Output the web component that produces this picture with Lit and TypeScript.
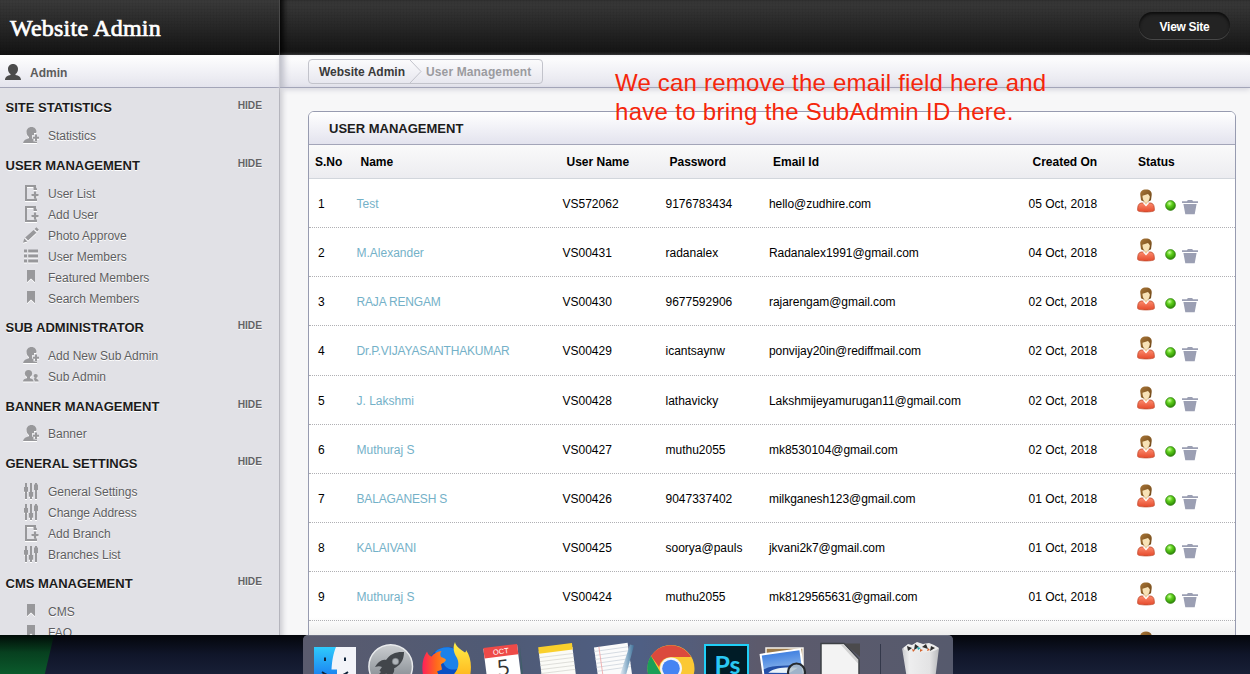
import { LitElement, html, css, svg } from "lit";
import { customElement } from "lit/decorators.js";
import { classMap } from "lit/directives/class-map.js";

type IconName = "adduser" | "users" | "doc" | "pencil" | "list" | "bookmark" | "sliders";

const sections: { title: string; items: [IconName, string][] }[] = [
  { title: "SITE STATISTICS", items: [["adduser", "Statistics"]] },
  {
    title: "USER MANAGEMENT",
    items: [
      ["doc", "User List"],
      ["doc", "Add User"],
      ["pencil", "Photo Approve"],
      ["list", "User Members"],
      ["bookmark", "Featured Members"],
      ["bookmark", "Search Members"],
    ],
  },
  { title: "SUB ADMINISTRATOR", items: [["adduser", "Add New Sub Admin"], ["users", "Sub Admin"]] },
  { title: "BANNER MANAGEMENT", items: [["adduser", "Banner"]] },
  {
    title: "GENERAL SETTINGS",
    items: [
      ["sliders", "General Settings"],
      ["sliders", "Change Address"],
      ["doc", "Add Branch"],
      ["sliders", "Branches List"],
    ],
  },
  { title: "CMS MANAGEMENT", items: [["bookmark", "CMS"], ["bookmark", "FAQ"]] },
];

const rows: string[][] = [
  ["1", "Test", "VS572062", "9176783434", "hello@zudhire.com", "05 Oct, 2018"],
  ["2", "M.Alexander", "VS00431", "radanalex", "Radanalex1991@gmail.com", "04 Oct, 2018"],
  ["3", "RAJA RENGAM", "VS00430", "9677592906", "rajarengam@gmail.com", "02 Oct, 2018"],
  ["4", "Dr.P.VIJAYASANTHAKUMAR", "VS00429", "icantsaynw", "ponvijay20in@rediffmail.com", "02 Oct, 2018"],
  ["5", "J. Lakshmi", "VS00428", "lathavicky", "Lakshmijeyamurugan11@gmail.com", "02 Oct, 2018"],
  ["6", "Muthuraj S", "VS00427", "muthu2055", "mk8530104@gmail.com", "02 Oct, 2018"],
  ["7", "BALAGANESH S", "VS00426", "9047337402", "milkganesh123@gmail.com", "01 Oct, 2018"],
  ["8", "KALAIVANI", "VS00425", "soorya@pauls", "jkvani2k7@gmail.com", "01 Oct, 2018"],
  ["9", "Muthuraj S", "VS00424", "muthu2055", "mk8129565631@gmail.com", "01 Oct, 2018"],
];

const glyphs: Record<IconName, unknown> = {
  adduser: svg`<path d="M8.500 0C5.500 0 3.500 2.200 3.500 5c0 2.300 1 4.200 2.500 5v1.200C3 12 .6 13 0 16h14v-1.500h-3.500V11.800H9V8.200h2V6h1.900C13.300 5.700 13.500 5.300 13.500 5c0-2.800-2-5-5-5z"/><path d="M12 7.500h2v2.300h2v2h-2V14h-2v-2.200h-2v-2h2z"/>`,
  users: svg`<circle cx="5.500" cy="5.500" r="3.600"/><path d="M4 8h3v2.200c2 .5 3.500 1.300 3.500 3.300H0c0-2 1.700-2.800 4-3.300z"/><circle cx="12.700" cy="8" r="2.100"/><path d="M11.900 9.500h1.600v1.200c1.200.4 2.100 1.200 2.100 2.800h-4c0-1.200-.3-2-.9-2.600z"/>`,
  doc: svg`<path d="M2 0h11v4h-1.800V2H4v12h8v-.5h2V16H2z"/><path d="M10.500 0L14 3.500V5h-3.500z"/><path d="M10.900 6.500h2.200V9h2.400v2.200h-2.400v2.500h-2.200v-2.500H8.500V9h2.400z"/>`,
  pencil: svg`<path d="M0 15.800l1.300-4.300 3 3zM2.200 10.600l8.400-7.700 2.800 2.800-8.300 7.900zM11.600 2L13.400.2l2.500 2.500-1.700 1.900z"/>`,
  list: svg`<path d="M1 1.500h3v3H1zM5.200 1.500H15v3H5.200zM1 6.500h3v3H1zM5.200 6.500H15v3H5.200zM1 11.500h3v3H1zM5.200 11.500H15v3H5.200z"/>`,
  bookmark: svg`<path d="M4 1h8v12.200L8 9.500l-4 3.700z"/>`,
  sliders: svg`<path d="M2 0h2v4h1v4.700H4V16H2V8.700H1V4h1zM7 0h2v9h1.200v4.700H9V16H7v-2.300H5.800V9H7zM12 0h2v1.500h1v5.800h-1V16h-2V7.300h-1V1.500h1z"/>`,
};

const person = html`<svg class="person" width="18" height="24" viewBox="0 0 18 24">
  <defs>
    <linearGradient id="s" x1="0" y1="0" x2="0" y2="1"><stop offset="0" stop-color="#fb8a6c" /><stop offset="1" stop-color="#e64a2c" /></linearGradient>
    <linearGradient id="h" x1="0" y1="0" x2="1" y2="1"><stop offset="0" stop-color="#a87638" /><stop offset="1" stop-color="#6d4516" /></linearGradient>
  </defs>
  <path d="M.7 21.500c-.2-4 .5-6.800 3.300-7.500h10c2.800.7 3.500 3.500 3.300 7.500-.4 1.900-16.200 1.900-16.600 0z" fill="url(#s)" stroke="#c04c30" stroke-width=".8" />
  <path d="M5.500 13.500L9 17.500l3.500-4z" fill="#fff" />
  <path d="M7.500 11h3v3L9 15.800 7.500 14z" fill="#eccb9a" />
  <path d="M3.300 6C2.800 2.500 5.300.5 9 .5s6.200 2 5.700 5.500L14 11.200l-2.500 1.200h-5L4 11.200z" fill="url(#h)" />
  <path d="M5.500 6.800L11 5l1.800 2.300c0 3.200-1.400 5.900-3.700 5.900S5.500 10.500 5.500 6.800z" fill="#f8e2b6" />
</svg>`;

const actions = html`${person}
  <svg class="dot" width="11" height="11" viewBox="0 0 11 11">
    <defs><radialGradient id="g" cx=".4" cy=".3" r=".7"><stop offset="0" stop-color="#c9ff9a" /><stop offset=".4" stop-color="#5fd01c" /><stop offset="1" stop-color="#2b8705" /></radialGradient></defs>
    <circle cx="5.500" cy="5.500" r="4.900" fill="url(#g)" stroke="#2f7d10" stroke-width=".7" />
  </svg>
  <svg class="bin" width="16" height="15" viewBox="0 0 16 15" fill="#9b9fb3">
    <path d="M0 1.200h5L5.800 0h4.400l.8 1.200h5v1.900H0zM1.400 4h13.200L12.700 14.300H3.300z" />
  </svg>`;

const dockArt = svg`
  <defs>
    <linearGradient id="fi" x1="0" y1="0" x2="0" y2="1"><stop offset="0" stop-color="#2fcafc"/><stop offset="1" stop-color="#1a7ff0"/></linearGradient>
    <linearGradient id="la" x1="0" y1="0" x2="0" y2="1"><stop offset="0" stop-color="#cbced1"/><stop offset="1" stop-color="#757c83"/></linearGradient>
    <linearGradient id="fx" x1="0" y1="0" x2="1" y2="0"><stop offset="0" stop-color="#ff1f5a"/><stop offset=".6" stop-color="#ff6a1c"/><stop offset="1" stop-color="#ff8f1f"/></linearGradient>
    <linearGradient id="fy" x1="0" y1="0" x2="0" y2="1"><stop offset="0" stop-color="#fff04a"/><stop offset="1" stop-color="#ffb81f"/></linearGradient>
    <linearGradient id="sky" x1="0" y1="0" x2="0" y2="1"><stop offset="0" stop-color="#3f7fe0"/><stop offset="1" stop-color="#b6d5f2"/></linearGradient>
    <linearGradient id="tr" x1="0" y1="0" x2="1" y2="0"><stop offset="0" stop-color="#c8c9cc"/><stop offset=".2" stop-color="#eeeeef"/><stop offset=".75" stop-color="#e3e3e4"/><stop offset="1" stop-color="#b9babd"/></linearGradient>
    <linearGradient id="pen" x1="0" y1="0" x2="1" y2="0"><stop offset="0" stop-color="#e8eff5"/><stop offset=".5" stop-color="#8fb2cc"/><stop offset="1" stop-color="#3f6f96"/></linearGradient>
  </defs>
  <!-- finder -->
  <path d="M11 12h42v30H11z" fill="#f3f4f9"/>
  <path d="M11 12h22c-2.500 6-4 13-4.500 22.500H34V42H11z" fill="url(#fi)"/>
  <path d="M22 22.500v3.500M42 22.500v3.500" stroke="#10243a" stroke-width="2"/>
  <path d="M19 37c8 6 18 6 26 0" fill="none" stroke="#10243a" stroke-width="1.800"/>
  <!-- launchpad -->
  <circle cx="87.700" cy="31.500" r="21.800" fill="url(#la)" stroke="#e8eaec" stroke-width="1.500"/>
  <path d="M101 17c-8-.5-14 2-18 8-4-1-8 2-11 7 3-1 5-1 7 0l-2.500 3.500 1.500 1.500-4 4h6l3-2.500 2 1 1 3c4-3 6-6 5-9 6-3 10-8 10-16.500z" fill="#42464b"/>
  <circle cx="92.500" cy="26.500" r="3.200" fill="#b0b5ba" stroke="#7b8085" stroke-width=".6"/>
  <!-- firefox -->
  <circle cx="145" cy="32" r="20" fill="#0a4fc4"/>
  <path d="M132 17c7-7 20-6 25 2l2 12c-6 6-16 4-18-2z" fill="#1c82ea"/>
  <path d="M120 40c-1.500-9-.5-17 4-23.500 1 3 2.500 4.500 4.500 5C131 18 135 16.500 138.500 16c-1.500 2-1.500 4-.5 6 2 1 4 1 5 3-1 2.500-4 3-5 4.500l1 5-5 2 2 4z" fill="url(#fx)"/>
  <path d="M152 7c.5 4 5 7 10 10.500 1-.5 1-1.500 1-2.500 5 7 6 17 4 26h-18c6-5 8-12 5-18-3.500-5-4.500-11-2-16z" fill="url(#fy)"/>
  <!-- calendar -->
  <path d="M182 14l3 27h-1zM217 11l3 28h-2z" fill="#35605f" opacity=".6"/>
  <g transform="rotate(-7 198 26)">
    <path d="M182 12h34v32h-34z" fill="#fff"/>
    <path d="M182 11h34v10.500h-34z" fill="#ee4a48"/>
    <text x="199" y="19" class="oct">OCT</text>
    <text x="199.500" y="40.500" class="five">5</text>
  </g>
  <!-- notes -->
  <g transform="rotate(-7 254 26)">
    <path d="M237 14h34v28h-34z" fill="#fbfbf7"/>
    <path d="M237 10h34v6.500h-34z" fill="#fad02c"/>
    <path d="M237 20.500h34M237 24.500h34M237 28.500h34M237 32.500h34M237 36.500h34" stroke="#d9d9d4" stroke-width=".8"/>
  </g>
  <!-- textedit -->
  <g transform="rotate(-8 310 26)">
    <path d="M293 10h34v34h-34z" fill="#fbfbfb"/>
    <path d="M293 14h34M293 18h34M293 22h34M293 26h34M293 30h34M293 34h34" stroke="#cfd6de" stroke-width=".8"/>
    <path d="M298 10v34" stroke="#f0a6a6" stroke-width=".8"/>
  </g>
  <path d="M327 9.500l4 1L323 40h-6z" fill="url(#pen)"/>
  <!-- chrome -->
  <circle cx="368" cy="33.500" r="23.500" fill="#fbc834"/>
  <path d="M348 21A23.500 23.500 0 0 1 388 22H368a12 12 0 0 0-12 10z" fill="#db4a3d"/>
  <path d="M348 21L360 42h-14A23.500 23.500 0 0 1 348 21z" fill="#1a9f58"/>
  <circle cx="368" cy="33.500" r="11" fill="#f5f5f5"/><circle cx="368" cy="33.500" r="8.800" fill="#4484f3"/>
  <!-- photoshop -->
  <path d="M402 10h43v34h-43z" fill="#001c27" stroke="#20d0f8" stroke-width="2"/>
  <text x="424.500" y="38.500" class="ps">Ps</text>
  <!-- preview -->
  <path d="M463 13h37v28h-37z" fill="#9d7a48" stroke="#f4f1ea" stroke-width="1.500"/>
  <g transform="rotate(-8 478 28)">
    <path d="M459 17h40v30h-40z" fill="url(#sky)" stroke="#fff" stroke-width="2"/>
    <path d="M460 32c12-5 25 2 38-1v14h-38z" fill="#2450a8"/>
    <path d="M464 36c8-5 18-3 30-1l-9 4z" fill="#e9f3fa"/>
  </g>
  <circle cx="493.500" cy="37" r="8.500" fill="#b5c4cf" fill-opacity=".85" stroke="#26292d" stroke-width="2.200"/>
  <!-- document -->
  <path d="M541 8.500h16V22z" fill="#4b4a4c"/>
  <path d="M518 8.500h23l15 16V42h-38z" fill="#f3f3f3" stroke="#3d4045" stroke-width="1.500"/>
  <path d="M541 9.500l14 15v4L538 10z" fill="#d0d0d0"/>
  <!-- separator -->
  <path d="M577.500 9v32" stroke="#33384a"/>
  <!-- trash -->
  <path d="M600 13l5-4 4 1 5-3 6 2 6-1 5 2 5 3-3 7h-30z" fill="#ececec"/>
  <path d="M604 11l5 2-4 3zM612 9l4 3-5 3zM619 12l4-3 2 5zM628 11l4 2-5 3z" fill="#2d2d2d"/>
  <path d="M609 14l3 1-2 2zM617 14l3 1-3 2zM625 13l2 2-3 1z" fill="#d5622c"/><path d="M614 12l4 1-3 2z" fill="#1fa7b0"/>
  <path d="M599 13c3 3 10 4.500 19 4.500S633 16 636 13l-3.500 28h-29z" fill="url(#tr)"/>
`;

@customElement("app-root")
export class AppRoot extends LitElement {
  static styles = css`
    :host { display: block; font-family: "Liberation Sans", Arial, sans-serif; font-size: 12px; color: #000; }
    * { box-sizing: border-box; }
    .screen { position: relative; width: 1250px; height: 674px; overflow: hidden; background: linear-gradient(#05070d 636px, #10162a 655px, #181f36); }
    .browser { height: 635px; display: grid; grid-template-columns: 280px 1fr; grid-template-rows: 55px 33px 1fr; overflow: hidden; background: #f7f7f8; }
    .brand, .top { background: repeating-linear-gradient(90deg, rgba(0,0,0,.04) 0 1px, transparent 1px 3px), repeating-linear-gradient(rgba(0,0,0,.04) 0 1px, transparent 1px 3px), linear-gradient(#3a3a3a, #131313); }
    .brand { border-right: 1px solid #4a4a4a; padding: 14px 0 0 10px; color: #fff; font: 24px/28px "Liberation Serif", serif; letter-spacing: .22px; -webkit-text-stroke: .7px #fff; z-index: 1; }
    .top { display: flex; justify-content: flex-end; padding: 12px 20px 0 0; box-shadow: inset 6px 0 6px -3px #000; }
    .view { width: 91px; height: 27px; border-radius: 14px; background: #232323; color: #fff; font-weight: bold; line-height: 30px; text-align: center; letter-spacing: -.3px; box-shadow: inset 0 2px 3px #0c0c0c, 0 1px 0 #484848; }
    .account, .crumbs { background: linear-gradient(#fff, #e4e4ed); border-bottom: 1px solid #a3a5b8; }
    .account { display: flex; align-items: center; padding: 2px 0 0 5px; gap: 9px; color: #5c5c5c; font-weight: bold; border-right: 1px solid #c4c4cd; }
    .account span { padding-top: 1px; }
    .account svg { fill: #4c4c4c; }
    .crumbs { display: flex; padding: 4px 0 0 28px; box-shadow: 0 2px 5px #d8d8df, inset 7px 0 6px -3px #bdbec8; z-index: 1; }
    .trail { display: flex; align-items: stretch; width: 235px; height: 25px; border: 1px solid #c2c3cb; border-radius: 4px; font-weight: bold; line-height: 24px; color: #3a3a3a; padding-left: 10px; }
    .trail svg { margin-left: 4px; flex: none; }
    .here { color: #9b9b9f; margin-left: 4px; letter-spacing: .13px; }
    .side { background: #e1e1e6; border-right: 1px solid #b5b5bd; padding-top: .4px; overflow: hidden; }
    .head { height: 36.4px; padding: 12px 17px 0 5.5px; display: flex; justify-content: space-between; font-weight: bold; font-size: 13px; line-height: 16px; color: #1b1b1b; text-shadow: 0 1px 0 #fff; }
    .hide { font-size: 10.2px; line-height: 13px; margin-top: -1px; color: #636366; }
    .item { height: 21px; padding-left: 23px; display: flex; align-items: center; gap: 9px; color: #5d5d60; text-shadow: 0 1px 0 #fff; white-space: nowrap; line-height: 21px; }
    .item span { padding-top: 3px; }
    .item svg { fill: #98989b; filter: drop-shadow(0 1px 0 #fff); flex: none; }
    .main { padding: 23px 14px 0 28px; overflow: hidden; box-shadow: inset 6px 0 5px -3px #cfcfd4; background: #f7f7f8; }
    .panel { width: 928px; height: 560px; border: 1px solid #979bb0; border-radius: 6px 6px 0 0; background: linear-gradient(#fff 505px, #ededed 524px); overflow: hidden; }
    .title { height: 33px; border-bottom: 1px solid #a3a5b8; background: linear-gradient(#fff, #e3e3ee); padding-left: 20px; font-size: 13px; font-weight: bold; line-height: 33px; color: #1c1c1c; }
    .row { display: grid; grid-template-columns: 47.5px 206px 103px 103.5px 259.5px 105.5px 1fr; height: 49.2px; border-bottom: 1px dotted #b0b0b4; line-height: 51px; white-space: nowrap; }
    .row.labels { height: 33.8px; border-bottom: 1px solid #d2d6dc; background: linear-gradient(#fafafa, #ececf0); font-weight: bold; line-height: 34px; }
    .labels span { padding-left: 4px; }
    .labels .no { padding-left: 6px; }
    .no { padding-left: 9px; }
    .name { color: #74b1c8; }
    .name.caps { letter-spacing: -.17px; }
    .mail { letter-spacing: -.05px; }
    .acts { display: flex; align-items: flex-start; padding-left: 3px; }
    .person { margin-top: 10px; }
    .dot { margin: 21px 0 0 9.500px; }
    .bin { margin: 21px 0 0 6.500px; }
    .note { position: absolute; left: 615px; top: 68px; color: #f5260b; font-size: 24px; line-height: 29px; letter-spacing: .2px; white-space: nowrap; z-index: 3; }
    .second { letter-spacing: .3px; }
    .wall { position: absolute; left: 0; top: 635px; width: 54px; height: 39px; background: linear-gradient(#010b07, #07401f 45%, #0b5a2c); clip-path: polygon(0 0, 100% 0, 83% 100%, 0 100%); }
    .dock { position: absolute; left: 303px; top: 635px; width: 650px; height: 39px; border-radius: 5px 5px 0 0; background: linear-gradient(90deg, #5a5b6e, #4f5a75 30%, #4f5f84 52%, #5c5a6c 70%, #565a6d); border-top: 1px solid #6c7080; overflow: hidden; }
    .dock svg { display: block; margin-top: -1px; }
    .oct { font: 7.500px "Liberation Sans", sans-serif; fill: #fff; text-anchor: middle; }
    .five { font: 22px "Open Sans", sans-serif; fill: #333; text-anchor: middle; }
    .ps { font: bold 25px Lato, sans-serif; fill: #2ac8f3; text-anchor: middle; }
  `;

  render() {
    return html`<div class="screen">
      <div class="browser">
        <div class="brand">Website Admin</div>
        <div class="top"><div class="view">View Site</div></div>
        <div class="account">
          <svg width="16" height="16" viewBox="0 0 16 16"><path d="M8 0c3 0 5 2.200 5 5 0 2.300-1 4.200-2.500 5v1c3 .6 5.500 2 5.500 5H0c0-3 2.500-4.400 5.500-5v-1C4 9.200 3 7.300 3 5c0-2.800 2-5 5-5z" /></svg>
          <span>Admin</span>
        </div>
        <div class="crumbs">
          <div class="trail">
            <span>Website Admin</span>
            <svg width="13" height="23" viewBox="0 0 13 23"><path d="M1 0l11 11.500L1 23" fill="none" stroke="#c2c3cb" /></svg>
            <span class="here">User Management</span>
          </div>
        </div>
        <div class="side">
          ${sections.map(
            (s) => html`<div class="head"><span>${s.title}</span><span class="hide">HIDE</span></div>
              ${s.items.map(([icon, label]) => html`<div class="item"><svg width="16" height="16" viewBox="0 0 16 16">${glyphs[icon]}</svg><span>${label}</span></div>`)}`
          )}
        </div>
        <div class="main">
          <div class="panel">
            <div class="title">USER MANAGEMENT</div>
            <div class="row labels">
              <span class="no">S.No</span><span>Name</span><span>User Name</span><span>Password</span><span>Email Id</span><span>Created On</span><span>Status</span>
            </div>
            ${rows.map(
              (r) => html`<div class="row">
                <span class="no">${r[0]}</span><span class=${classMap({ name: true, caps: /[A-Z]{4}/.test(r[1]) })}>${r[1]}</span><span>${r[2]}</span><span>${r[3]}</span><span class="mail">${r[4]}</span><span>${r[5]}</span>
                <div class="acts">${actions}</div>
              </div>`
            )}
            <div class="row"><span></span><span></span><span></span><span></span><span></span><span></span><div class="acts">${person}</div></div>
          </div>
        </div>
      </div>
      <div class="note">We can remove the email field here and<br /><span class="second">have to bring the SubAdmin ID here.</span></div>
      <div class="wall"></div>
      <div class="dock"><svg width="650" height="40" viewBox="0 0 650 40">${dockArt}</svg></div>
    </div>`;
  }
}
